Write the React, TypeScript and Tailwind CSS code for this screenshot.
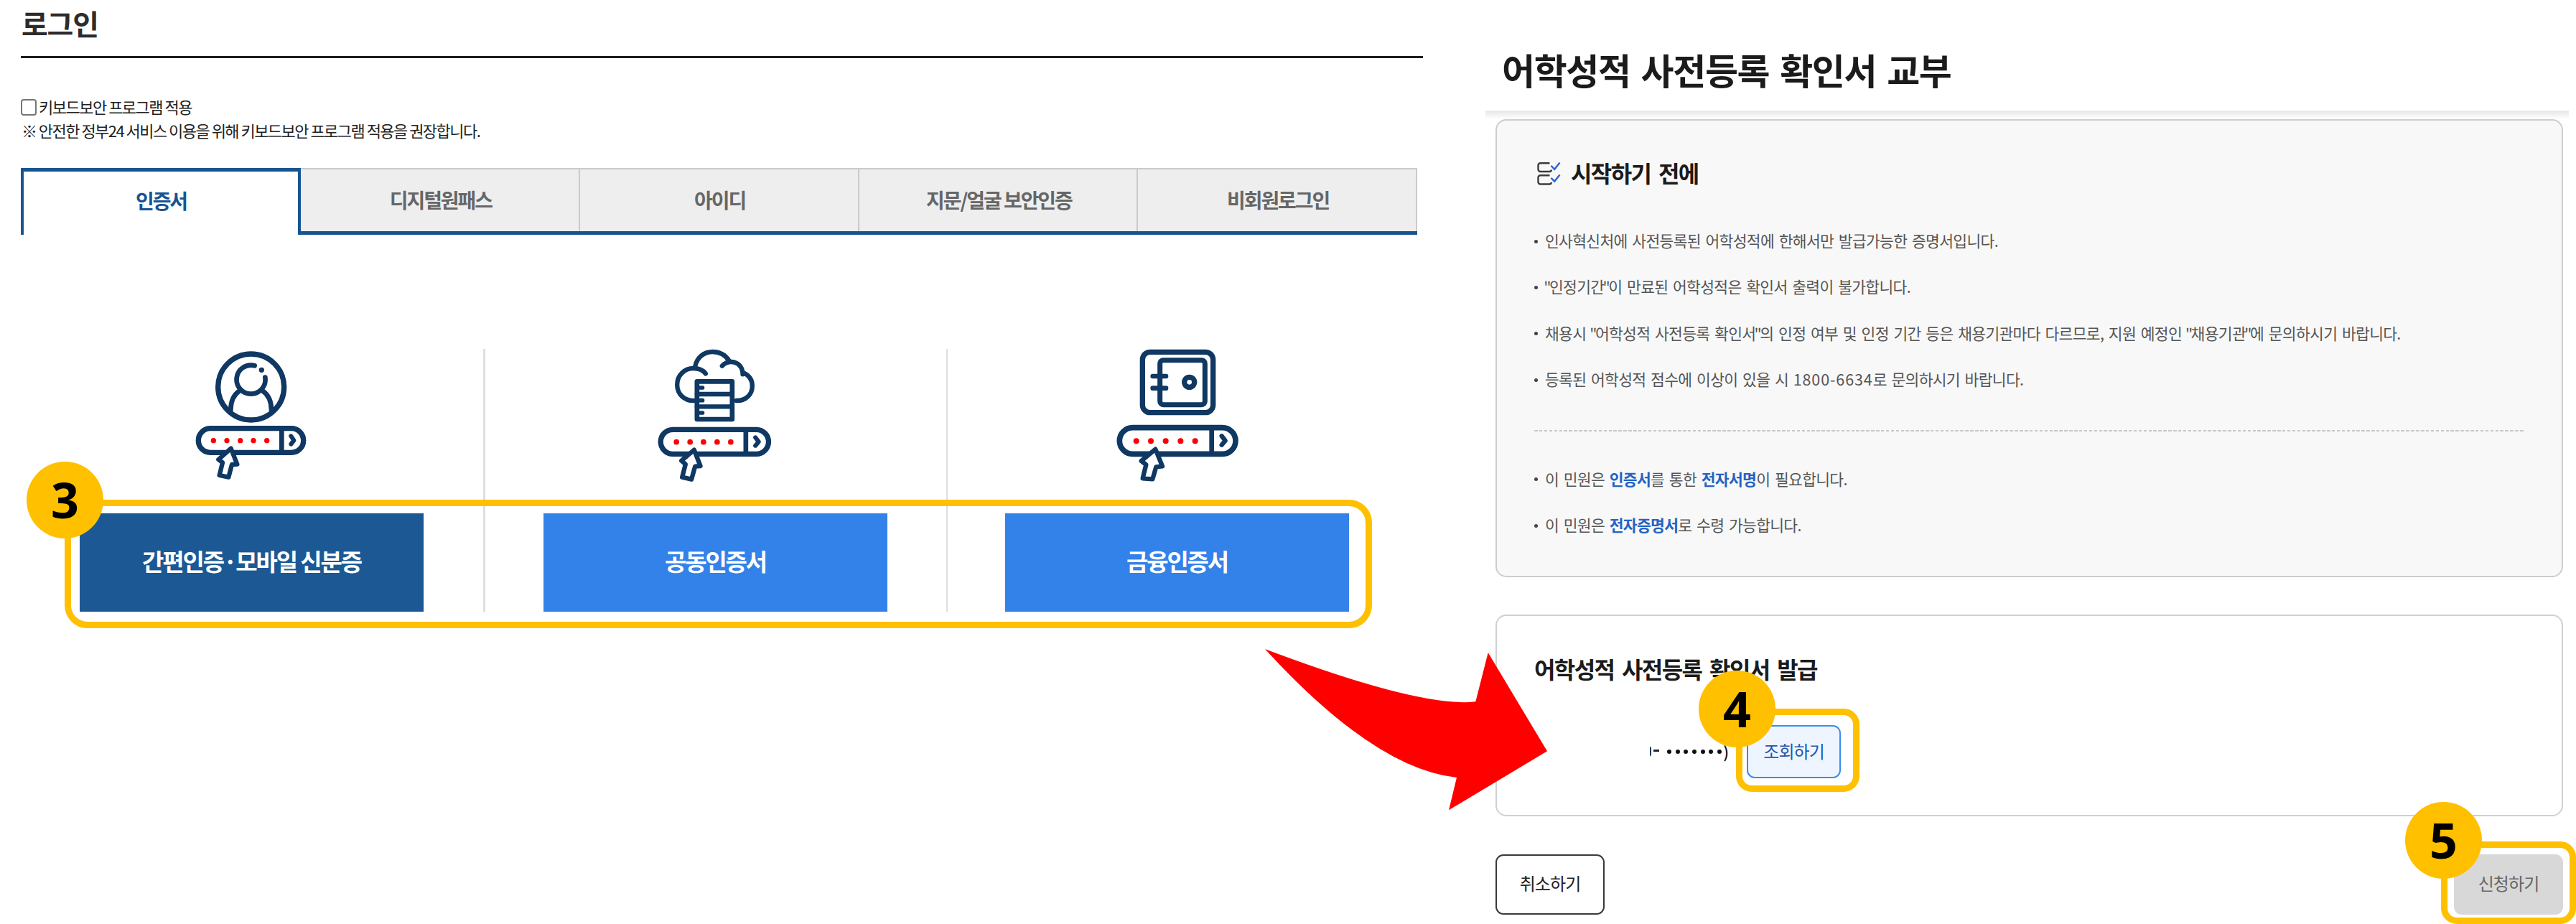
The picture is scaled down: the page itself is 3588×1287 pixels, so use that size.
import React from "react";

const NAVY = "#0f3862";

function Pointer({ d }: { d: string }) {
  return <path d={d} fill="#fff" stroke={NAVY} strokeWidth="19" strokeLinejoin="round" />;
}

function PersonIcon() {
  return (
    <svg viewBox="3 0 660 660" className="block h-[220px] w-[220px] overflow-visible" fill="none" stroke={NAVY} strokeLinecap="round">
      <circle cx="329" cy="237" r="138" strokeWidth="22" />
      <path d="M388 197 A60 60 0 1 1 344 148" strokeWidth="20" />
      <circle cx="373" cy="166" r="11" fill={NAVY} stroke="none" />
      <path d="M281 253 C256 270 244 298 244 334 M377 253 C402 270 414 298 414 334" strokeWidth="20" />
      <rect x="109" y="410" width="439" height="101" rx="50" strokeWidth="22" />
      <path d="M457 414 V507" strokeWidth="20" strokeLinecap="butt" />
      <path d="M496 442 L508 460 L496 476" strokeWidth="18" strokeLinejoin="round" />
      <g fill="#fb0007" stroke="none">
        <circle cx="172" cy="461" r="11" />
        <circle cx="228" cy="461" r="11" />
        <circle cx="284" cy="461" r="11" />
        <circle cx="339" cy="461" r="11" />
        <circle cx="395" cy="461" r="11" />
      </g>
      <Pointer d="M245 494 L271 560 L249 561 L235 614 L197 606 L210 553 L193 540 Z" />
    </svg>
  );
}

function CloudIcon() {
  return (
    <svg viewBox="19.5 0 660 660" className="block h-[220px] w-[220px] overflow-visible" fill="none" stroke={NAVY} strokeLinecap="round">
      <path d="M262 294 C218 297 188 266 188 228 C188 187 220 159 256 159 C279 159 297 167 307 181" strokeWidth="19" />
      <path d="M263 152 C270 113 300 90 336 90 C366 90 390 104 405 127" strokeWidth="19" />
      <path d="M376 149 C388 136 400 131 415 132 C445 134 462 155 462 184" strokeWidth="19" />
      <path d="M466 178 C490 189 502 210 502 233 C502 268 475 295 436 294" strokeWidth="19" />
      <rect x="271" y="214" width="147" height="158" strokeWidth="20" strokeLinejoin="round" />
      <path d="M271 267 H418 M271 319 H418" strokeWidth="19" />
      <path d="M278 240 H294 M278 293 H294 M278 345 H294" strokeWidth="17" />
      <rect x="119" y="415" width="451" height="102" rx="51" strokeWidth="22" />
      <path d="M475 418 V514" strokeWidth="20" strokeLinecap="butt" />
      <path d="M515 448 L529 466 L515 482" strokeWidth="18" strokeLinejoin="round" />
      <g fill="#fb0007" stroke="none">
        <circle cx="185" cy="467" r="11.5" />
        <circle cx="242" cy="467" r="11.5" />
        <circle cx="298" cy="467" r="11.5" />
        <circle cx="355" cy="467" r="11.5" />
        <circle cx="412" cy="467" r="11.5" />
      </g>
      <Pointer d="M259 500 L285 567 L263 569 L248 623 L209 614 L223 560 L206 545 Z" />
    </svg>
  );
}

function SafeIcon() {
  return (
    <svg viewBox="30 0 660 660" className="block h-[220px] w-[220px] overflow-visible" fill="none" stroke={NAVY} strokeLinecap="round">
      <rect x="214" y="91" width="295" height="253" rx="32" strokeWidth="22" />
      <rect x="287" y="125" width="188" height="186" rx="14" strokeWidth="21" />
      <path d="M257 192 H312 M257 242 H312" strokeWidth="20" />
      <circle cx="410" cy="217" r="21" strokeWidth="22" />
      <rect x="118" y="407" width="485" height="110" rx="55" strokeWidth="23" />
      <path d="M503 412 V512" strokeWidth="20" strokeLinecap="butt" />
      <path d="M545 442 L560 461 L545 479" strokeWidth="19" strokeLinejoin="round" />
      <g fill="#fb0007" stroke="none">
        <circle cx="188" cy="463" r="12" />
        <circle cx="249" cy="463" r="12" />
        <circle cx="311" cy="463" r="12" />
        <circle cx="373" cy="463" r="12" />
        <circle cx="434" cy="463" r="12" />
      </g>
      <Pointer d="M268 497 L297 568 L271 571 L256 622 L215 619 L229 562 L209 546 Z" />
    </svg>
  );
}

function ChecklistIcon() {
  return (
    <svg viewBox="0 0 32 32" className="block h-8 w-8 overflow-visible" fill="none" strokeWidth="2.4">
      <g stroke="#3c3c3c">
        <path d="M17.500 1.200 H4.500 a3 3 0 0 0 -3 3 V10 a3 3 0 0 0 3 3 H17 a3 3 0 0 0 3 -2.500" />
        <path d="M17.500 18.200 H4.500 a3 3 0 0 0 -3 3 V27.500 a3 3 0 0 0 3 3 H17 a3 3 0 0 0 3 -2.500" />
      </g>
      <g stroke="#2a66cf">
        <path d="M19.500 4.800 L24.200 9.800 L31.500 0.600" />
        <path d="M19.500 21.800 L24.200 26.600 L31.500 17.500" />
      </g>
    </svg>
  );
}

const TABS = ["디지털원패스", "아이디", "지문/얼굴 보안인증", "비회원로그인"];

const METHODS = [
  { label: "간편인증·모바일 신분증", icon: <PersonIcon />, color: "bg-[#1c5994]" },
  { label: "공동인증서", icon: <CloudIcon />, color: "bg-[#3382e9]" },
  { label: "금융인증서", icon: <SafeIcon />, color: "bg-[#3382e9]" },
];

const NOTICES = [
  "인사혁신처에 사전등록된 어학성적에 한해서만 발급가능한 증명서입니다.",
  "\"인정기간\"이 만료된 어학성적은 확인서 출력이 불가합니다.",
  "채용시 \"어학성적 사전등록 확인서\"의 인정 여부 및 인정 기간 등은 채용기관마다 다르므로, 지원 예정인 \"채용기관\"에 문의하시기 바랍니다.",
  "등록된 어학성적 점수에 이상이 있을 시 1800-6634로 문의하시기 바랍니다.",
];

// Quotation marks are set tighter and phone numbers looser than the Korean text.
function spaced(text: string) {
  return text.split(/("|[\d-]{4,})/).map((part, i) => {
    if (part === "\"") return <span key={i} className="ml-[-1.8px] tracking-[-2.5px]">{part}</span>;
    if (/^[\d-]{4,}$/.test(part)) return <span key={i} className="tracking-[0.9px]">{part}</span>;
    return part;
  });
}

function Notice({ children }: { children: React.ReactNode }) {
  return (
    <li className="flex h-[64.4px] items-center">
      <span className="mr-[10px] size-[5px] rounded-full bg-[#444]" />
      <span className="pb-[2px]">{children}</span>
    </li>
  );
}

function Key({ children }: { children: React.ReactNode }) {
  return <b className="font-bold text-[#2463c4]">{children}</b>;
}

function Badge({ n, className }: { n: number; className: string }) {
  return (
    <div className={"absolute flex size-[107px] items-center justify-center rounded-full bg-[#ffc000] pb-px font-['Noto_Sans',sans-serif] text-[68px] leading-none font-bold text-black " + className}>
      {n}
    </div>
  );
}

export default function App() {
  return (
    <div className="relative flex h-[1287px] w-[3588px] overflow-hidden bg-white font-['Noto_Sans_CJK_KR',sans-serif] whitespace-nowrap">
      <section className="w-[2069px] shrink-0 pl-[29px]">
        <h1 className="flex h-[81px] w-[1953px] items-start border-b-3 border-[#1c1c1c] pt-[11px] pl-px text-[40px] leading-[42px] font-bold tracking-[-1.2px] text-[#2c2c2c]">
          로그인
        </h1>
        <div className="mt-[51px] text-[22px] leading-[33px] tracking-[-1.5px] text-[#222]">
          <label className="flex items-center">
            <span className="mt-px mr-[3px] h-[23px] w-[22px] rounded-[4px] border-2 border-[#767676] bg-white" />
            키보드보안 프로그램 적용
          </label>
          <p className="pl-px tracking-[-1.53px]">※ 안전한 정부24 서비스 이용을 위해 키보드보안 프로그램 적용을 권장합니다.</p>
        </div>
        <div className="mt-[36px] flex h-[93px] w-[1945px] text-[28px] font-bold tracking-[-2.05px]">
          <div className="flex w-[390px] items-center justify-center border-x-4 border-t-5 border-[#175592] bg-white pb-[8px] pl-px text-[#175592]">인증서</div>
          {TABS.map((t) => (
            <div key={t} className="flex flex-1 flex-col">
              <div className="flex flex-1 items-center justify-center border-t-2 border-r-2 border-[#cacaca] bg-[#eee] pb-[3px] pl-[3px] text-[#666]">{t}</div>
              <div className="h-[5px] bg-[#175592]" />
            </div>
          ))}
        </div>
        <div className="mt-[133px] flex pl-[82px]">
          {METHODS.map((m, i) => (
            <div key={m.label} className="flex">
              {i > 0 && <div className={"mt-[26px] h-[366px] bg-[#dedede] " + (i === 1 ? "mr-[81px] ml-[83px] w-[3px]" : "mr-[80px] ml-[82px] w-[2px]")} />}
              <div className="flex w-[479px] flex-col items-center">
                {m.icon}
                <button className={"mt-[35px] flex h-[137px] w-full items-center justify-center pb-[3px] text-[33px] font-bold tracking-[-2.15px] text-white " + m.color}>
                  {m.label}
                </button>
              </div>
            </div>
          ))}
        </div>
      </section>

      <section className="w-[1519px] shrink-0">
        <h2 className="flex h-[154px] items-center pt-[38px] pl-[23px] text-[50px] leading-[60px] font-bold tracking-[-1.35px] text-[#1b1b1b] [word-spacing:5px]">
          어학성적 사전등록 확인서 교부
        </h2>
        <div className="h-[12px] w-[1509px] bg-linear-to-b from-[#e6e6e6] to-white" />
        <div className="ml-[14px] h-[638px] w-[1487px] rounded-[15px] border-2 border-[#cdcdcd] bg-[#f8f8f8] pr-[52px] pl-[52px] text-[21.5px] tracking-[-0.67px] text-[#555] [word-spacing:2.5px]">
          <div className="flex pt-[58px] pl-[4px]">
            <ChecklistIcon />
            <h3 className="mt-[-1px] ml-[15px] text-[32px] leading-[30px] font-bold tracking-[-1.6px] text-[#1b1b1b] [word-spacing:5px]">시작하기 전에</h3>
          </div>
          <ul className="mt-[46px]">
            {NOTICES.map((n) => (
              <Notice key={n}>{spaced(n)}</Notice>
            ))}
          </ul>
          <div className="mt-[37px] h-[2px] bg-[repeating-linear-gradient(90deg,#c8c8c8_0_4.5px,transparent_4.5px_6.9px)]" />
          <ul className="mt-[35px]">
            <Notice>
              이 민원은 <Key>인증서</Key>를 통한 <Key>전자서명</Key>이 필요합니다.
            </Notice>
            <Notice>
              이 민원은 <Key>전자증명서</Key>로 수령 가능합니다.
            </Notice>
          </ul>
        </div>
        <div className="mt-[52px] ml-[14px] h-[281px] w-[1487px] rounded-[15px] border-2 border-[#d0d0d0] bg-white pl-[52px]">
          <h3 className="pt-[57px] text-[32px] leading-[32px] font-bold tracking-[-1.6px] text-[#1b1b1b] [word-spacing:5px]">어학성적 사전등록 확인서 발급</h3>
          <div className="mt-[63px] flex h-[74px] items-center pl-[161px]">
            <div className="mr-[3px] mb-[2px] h-[13px] w-[2px] rounded-r-full bg-[#1d3a5f]" />
            <div className="mb-[4px] h-[3px] w-[8px] bg-[#222]" />
            <div className="ml-[11px] flex gap-[5.7px]">
              {[0, 1, 2, 3, 4, 5, 6].map((k) => (
                <span key={k} className="size-[6px] rounded-full bg-[#111]" />
              ))}
            </div>
            <span className="w-[35px] pb-[2px] pl-[2px] text-[22px] font-medium text-[#111]">)</span>
            <button className="flex h-[74px] w-[131px] items-center justify-center rounded-[11px] border-2 border-[#3c8ce8] bg-[#eff5ff] pb-[2px] text-[24px] tracking-[-0.9px] text-[#2457a6]">조회하기</button>
          </div>
        </div>
        <div className="mt-[53px] ml-[14px] flex w-[1487px] justify-between text-[24px] tracking-[-0.9px]">
          <button className="flex h-[84px] w-[152px] items-center justify-center rounded-[11px] border-2 border-[#3a3a3a] bg-white pb-[4px] text-[#222]">취소하기</button>
          <button className="flex h-[84px] w-[152px] items-center justify-center rounded-[11px] bg-[#d8d8d8] pb-[4px] text-[#666]">신청하기</button>
        </div>
      </section>

      <svg viewBox="1760 900 400 232" className="absolute top-[900px] left-[1760px] h-[232px] w-[400px]">
        <path d="M1762 904 Q1979 986 2055.300 977.300 L2072.700 909 L2155 1046.300 L2018 1128.300 L2029 1083 Q1915 1071 1762 904 Z" fill="#fe0000" />
      </svg>

      <div className="absolute top-[696px] left-[90px] h-[179px] w-[1821px] rounded-[32px] border-9 border-[#ffc000]" />
      <Badge n={3} className="top-[643px] left-[37px]" />
      <div className="absolute top-[987px] left-[2418px] h-[116px] w-[172px] rounded-[22px] border-9 border-[#ffc000]" />
      <Badge n={4} className="top-[934px] left-[2366px]" />
      <div className="absolute top-[1172px] left-[3400px] h-[115px] w-[188px] rounded-[22px] border-9 border-[#ffc000]" />
      <Badge n={5} className="top-[1117px] left-[3350px]" />
    </div>
  );
}
